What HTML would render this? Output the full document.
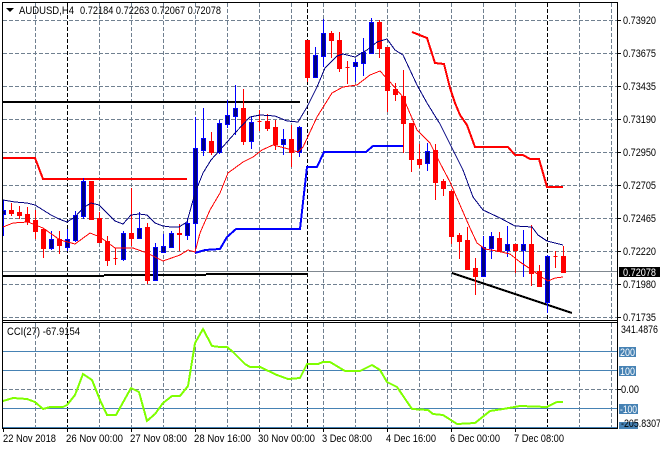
<!DOCTYPE html>
<html><head><meta charset="utf-8"><style>
html,body{margin:0;padding:0;background:#fff;width:660px;height:450px;overflow:hidden}
svg{display:block}
text{font-family:"Liberation Sans",sans-serif;font-size:11px;fill:#000}
.c{shape-rendering:crispEdges;fill:none}
</style></head><body>
<svg width="660" height="450" viewBox="0 0 660 450" xmlns="http://www.w3.org/2000/svg">
<rect width="660" height="450" fill="#fff"/>
<!-- horizontal grid -->
<path class="c" stroke="#708090" stroke-dasharray="4 2" d="M3 20.5H617M3 53.5H617M3 86.5H617M3 119.5H617M3 152.5H617M3 185.5H617M3 218.5H617M3 251.5H617M3 284.5H617M3 317.5H617M3 389.5H617"/>
<!-- vertical grid -->
<path class="c" stroke="#708090" stroke-dasharray="4 2" d="M35.5 3V320M99.5 3V320M131.5 3V320M163.5 3V320M195.5 3V320M227.5 3V320M259.5 3V320M291.5 3V320M323.5 3V320M355.5 3V320M387.5 3V320M419.5 3V320M451.5 3V320M483.5 3V320M515.5 3V320M579.5 3V320M611.5 3V320M35.5 323V428M99.5 323V428M131.5 323V428M163.5 323V428M195.5 323V428M227.5 323V428M259.5 323V428M291.5 323V428M323.5 323V428M355.5 323V428M387.5 323V428M419.5 323V428M451.5 323V428M483.5 323V428M515.5 323V428M579.5 323V428M611.5 323V428"/>
<path class="c" stroke="#000" stroke-dasharray="4 2" d="M67.5 3V320M307.5 3V320M547.5 3V320M67.5 323V428M307.5 323V428M547.5 323V428"/>
<!-- price line -->
<path class="c" stroke="#808890" d="M3 271.5H617"/>
<!-- CCI levels -->
<path class="c" stroke="#4682b4" d="M3 351.5H617M3 370.5H617M3 408.5H617M3 427.5H617"/>
<!-- horizontal black lines -->
<path class="c" stroke="#000" stroke-width="2" d="M3 102H300M3 276H104M104 275H206M206 274H307"/>
<polyline class="c" stroke="#000" stroke-width="2" points="452,273 572,313"/>
<!-- thick red / blue steps -->
<polyline class="c" stroke="#f00" stroke-width="2" points="3,158 35,158 43,179 187,179"/>
<polyline class="c" stroke="#f00" stroke-width="2" points="412,32 417,34 427,38 435,63 444,64 450,88 455,103 460,115 467,125 475,147 508,147 515,155 523,155 530,159 539,159 547,187 563,187"/>
<polyline class="c" stroke="#00f" stroke-width="2" points="195,253 205,250 220,249 227,237 236,229 300,229 307,167 317,167 324,152 366,152 373,146 403,146"/>
<!-- wicks -->
<path class="c" stroke="#f00" d="M11.5 203V216M19.5 206V219M27.5 207V225M35.5 210V239M43.5 228V258M59.5 231V254M91.5 181V220M99.5 212V242M107.5 236V266M115.5 248V265M131.5 188V246M147.5 223V284M179.5 224V251M211.5 132V155M243.5 89V145M259.5 110V131M267.5 114V131M275.5 120V150M291.5 125V167M307.5 40V82M331.5 31V58M339.5 32V72M347.5 61V84M379.5 20V58M387.5 47V112M395.5 83V101M403.5 70V153M411.5 123V172M419.5 144V168M435.5 144V200M443.5 179V196M451.5 190V244M459.5 233V259M467.5 227V270M475.5 258V295M499.5 232V251M515.5 244V273M531.5 225V286M539.5 265V287M555.5 251V268M563.5 246V272"/>
<path class="c" stroke="#00f" d="M3.5 200V236M51.5 231V250M67.5 229V251M75.5 211V242M83.5 178V219M123.5 231V261M139.5 212V239M155.5 243V280M163.5 234V252M171.5 231V247M187.5 218V240M195.5 117V254M203.5 108V156M219.5 120V154M227.5 100V128M235.5 85V135M251.5 116V149M283.5 129V155M299.5 126V157M315.5 47V77M323.5 19V67M355.5 59V82M363.5 38V76M371.5 18V54M427.5 143V171M483.5 236V276M491.5 232V259M507.5 226V257M523.5 230V277M547.5 255V313"/>
<!-- bodies -->
<path class="c" style="fill:#f00" stroke="#f00" d="M9.5 210.5h4v3h-4zM17.5 212.5h4v3h-4zM25.5 214.5h4v7h-4zM33.5 220.5h4v11h-4zM41.5 229.5h4v19h-4zM57.5 239.5h4v6h-4zM89.5 181.5h4v38h-4zM97.5 218.5h4v24h-4zM105.5 241.5h4v19h-4zM113.5 258.5h4v0h-4zM129.5 233.5h4v5h-4zM145.5 227.5h4v53h-4zM177.5 233.5h4v1h-4zM209.5 141.5h4v11h-4zM241.5 108.5h4v33h-4zM257.5 121.5h4v0h-4zM265.5 121.5h4v7h-4zM273.5 127.5h4v17h-4zM289.5 139.5h4v13h-4zM305.5 40.5h4v37h-4zM329.5 33.5h4v7h-4zM337.5 40.5h4v28h-4zM345.5 67.5h4v0h-4zM377.5 22.5h4v26h-4zM385.5 47.5h4v43h-4zM393.5 89.5h4v5h-4zM401.5 96.5h4v27h-4zM409.5 123.5h4v36h-4zM417.5 159.5h4v5h-4zM433.5 150.5h4v32h-4zM441.5 181.5h4v7h-4zM449.5 191.5h4v45h-4zM457.5 235.5h4v6h-4zM465.5 240.5h4v29h-4zM473.5 268.5h4v8h-4zM497.5 238.5h4v13h-4zM513.5 244.5h4v6h-4zM529.5 244.5h4v29h-4zM537.5 271.5h4v15h-4zM553.5 256.5h4v0h-4zM561.5 256.5h4v16h-4z"/>
<path class="c" style="fill:#000080" stroke="#00f" d="M1.5 210.5h4v4h-4zM49.5 239.5h4v9h-4zM65.5 239.5h4v8h-4zM73.5 215.5h4v25h-4zM81.5 181.5h4v35h-4zM121.5 233.5h4v26h-4zM137.5 228.5h4v10h-4zM153.5 247.5h4v33h-4zM161.5 246.5h4v6h-4zM169.5 233.5h4v14h-4zM185.5 223.5h4v12h-4zM193.5 148.5h4v75h-4zM201.5 138.5h4v12h-4zM217.5 123.5h4v29h-4zM225.5 115.5h4v9h-4zM233.5 108.5h4v8h-4zM249.5 122.5h4v19h-4zM281.5 139.5h4v5h-4zM297.5 127.5h4v25h-4zM313.5 55.5h4v22h-4zM321.5 33.5h4v23h-4zM353.5 62.5h4v4h-4zM361.5 52.5h4v11h-4zM369.5 22.5h4v31h-4zM425.5 151.5h4v12h-4zM481.5 247.5h4v29h-4zM489.5 236.5h4v12h-4zM505.5 244.5h4v6h-4zM521.5 244.5h4v6h-4zM545.5 256.5h4v46h-4z"/>
<!-- MAs -->
<polyline class="c" stroke="#000080" points="3,200 15,202 27,203 35,205 43,210 51,215 59,219 67,222 75,217 83,208 91,203 99,205 107,213 115,221 123,224 131,215 139,214 147,215 155,223 163,226 171,227 179,227 187,222 195,193 203,173 211,160 220,150 235,133 250,117 260,115 275,116 287,121 298,122 307,107 317,87 325,68 337,56 343,54 355,57 367,50 377,42 387,39 395,50 403,55 417,85 427,103 440,124 453,150 463,170 473,197 483,210 500,218 515,226 532,227 538,235 547,241 563,245"/>
<polyline class="c" stroke="#f00" points="3,227 13,223 28,222 43,228 60,240 75,244 90,233 100,237 115,248 133,248 147,253 163,261 180,255 188,250 195,252 200,233 210,210 220,193 228,173 243,162 253,157 262,150 273,145 285,148 298,152 303,147 317,117 332,93 343,87 357,85 370,75 380,71 390,82 403,97 417,130 430,143 440,163 450,182 460,205 470,228 477,243 485,249 497,251 510,254 520,262 532,270 540,276 548,281 555,278 563,277"/>
<!-- CCI -->
<polyline class="c" stroke="#7fff00" stroke-width="2" points="3,401 13,398 27,399 35,402 43,409 50,407 63,407 67,405 75,395 83,374 92,380 100,400 107,415 116,415 131,388 139,392 147,421 155,414 163,403 172,396 180,396 188,386 195,343 203,329 212,346 220,347 227,347 233,352 245,364 250,367 260,367 277,375 288,379 300,378 307,364 318,364 323,362 330,362 345,371 360,371 372,365 380,370 387,382 397,387 412,409 428,410 433,414 443,415 457,424 475,423 490,411 503,409 520,406 547,407 557,402 563,402"/>
<!-- frame -->
<rect x="0" y="0" width="2" height="450" fill="#fff"/>
<path class="c" stroke="#000" d="M2.5 2.5H617.5V428.5H2.5ZM2.5 320.5H617.5M2.5 322.5H617.5"/>
<path class="c" stroke="#000" d="M618 20.5h3M618 53.5h3M618 86.5h3M618 119.5h3M618 152.5h3M618 185.5h3M618 218.5h3M618 251.5h3M618 284.5h3M618 317.5h3M618 389.5h3M3.5 429v3M67.5 429v3M131.5 429v3M195.5 429v3M259.5 429v3M323.5 429v3M387.5 429v3M451.5 429v3M515.5 429v3"/>
<!-- legend -->
<path d="M6 8h8l-4 4z" fill="#000"/>
<text x="19" y="14" textLength="55" lengthAdjust="spacingAndGlyphs">AUDUSD,H4</text>
<text x="80" y="14" textLength="141" lengthAdjust="spacingAndGlyphs">0.72184 0.72263 0.72067 0.72078</text>
<text x="7" y="335" textLength="73" lengthAdjust="spacingAndGlyphs">CCI(27) -67.9154</text>
<!-- price axis -->
<text x="623" y="24" textLength="33" lengthAdjust="spacingAndGlyphs">0.73920</text>
<text x="623" y="57" textLength="33" lengthAdjust="spacingAndGlyphs">0.73675</text>
<text x="623" y="90" textLength="33" lengthAdjust="spacingAndGlyphs">0.73435</text>
<text x="623" y="123" textLength="33" lengthAdjust="spacingAndGlyphs">0.73190</text>
<text x="623" y="156" textLength="33" lengthAdjust="spacingAndGlyphs">0.72950</text>
<text x="623" y="189" textLength="33" lengthAdjust="spacingAndGlyphs">0.72705</text>
<text x="623" y="222" textLength="33" lengthAdjust="spacingAndGlyphs">0.72465</text>
<text x="623" y="255" textLength="33" lengthAdjust="spacingAndGlyphs">0.72220</text>
<text x="623" y="288" textLength="33" lengthAdjust="spacingAndGlyphs">0.71980</text>
<text x="623" y="321" textLength="33" lengthAdjust="spacingAndGlyphs">0.71735</text>
<rect x="619" y="267" width="41" height="10" fill="#000"/>
<text x="623" y="276" textLength="33" lengthAdjust="spacingAndGlyphs" style="fill:#fff">0.72078</text>
<!-- CCI axis -->
<text x="621" y="333" textLength="37" lengthAdjust="spacingAndGlyphs">341.4876</text>
<rect x="619" y="347" width="17" height="10" fill="#4682b4"/>
<text x="620" y="356" textLength="15" lengthAdjust="spacingAndGlyphs" style="fill:#fff">200</text>
<rect x="619" y="366" width="17" height="10" fill="#4682b4"/>
<text x="620" y="375" textLength="15" lengthAdjust="spacingAndGlyphs" style="fill:#fff">100</text>
<text x="621" y="393" textLength="18" lengthAdjust="spacingAndGlyphs">0.00</text>
<rect x="619" y="404" width="19" height="10" fill="#4682b4"/>
<text x="620" y="413" textLength="17" lengthAdjust="spacingAndGlyphs" style="fill:#fff">-100</text>
<rect x="619" y="422" width="19" height="7" fill="#4682b4"/>
<text x="621" y="427" textLength="40" lengthAdjust="spacingAndGlyphs">-205.8307</text>
<!-- time axis -->
<text x="3" y="442" textLength="53" lengthAdjust="spacingAndGlyphs">22 Nov 2018</text>
<text x="66" y="442" textLength="57" lengthAdjust="spacingAndGlyphs">26 Nov 00:00</text>
<text x="130" y="442" textLength="57" lengthAdjust="spacingAndGlyphs">27 Nov 08:00</text>
<text x="194" y="442" textLength="57" lengthAdjust="spacingAndGlyphs">28 Nov 16:00</text>
<text x="258" y="442" textLength="57" lengthAdjust="spacingAndGlyphs">30 Nov 00:00</text>
<text x="322" y="442" textLength="50" lengthAdjust="spacingAndGlyphs">3 Dec 08:00</text>
<text x="386" y="442" textLength="50" lengthAdjust="spacingAndGlyphs">4 Dec 16:00</text>
<text x="450" y="442" textLength="50" lengthAdjust="spacingAndGlyphs">6 Dec 00:00</text>
<text x="514" y="442" textLength="50" lengthAdjust="spacingAndGlyphs">7 Dec 08:00</text>
</svg>
</body></html>
